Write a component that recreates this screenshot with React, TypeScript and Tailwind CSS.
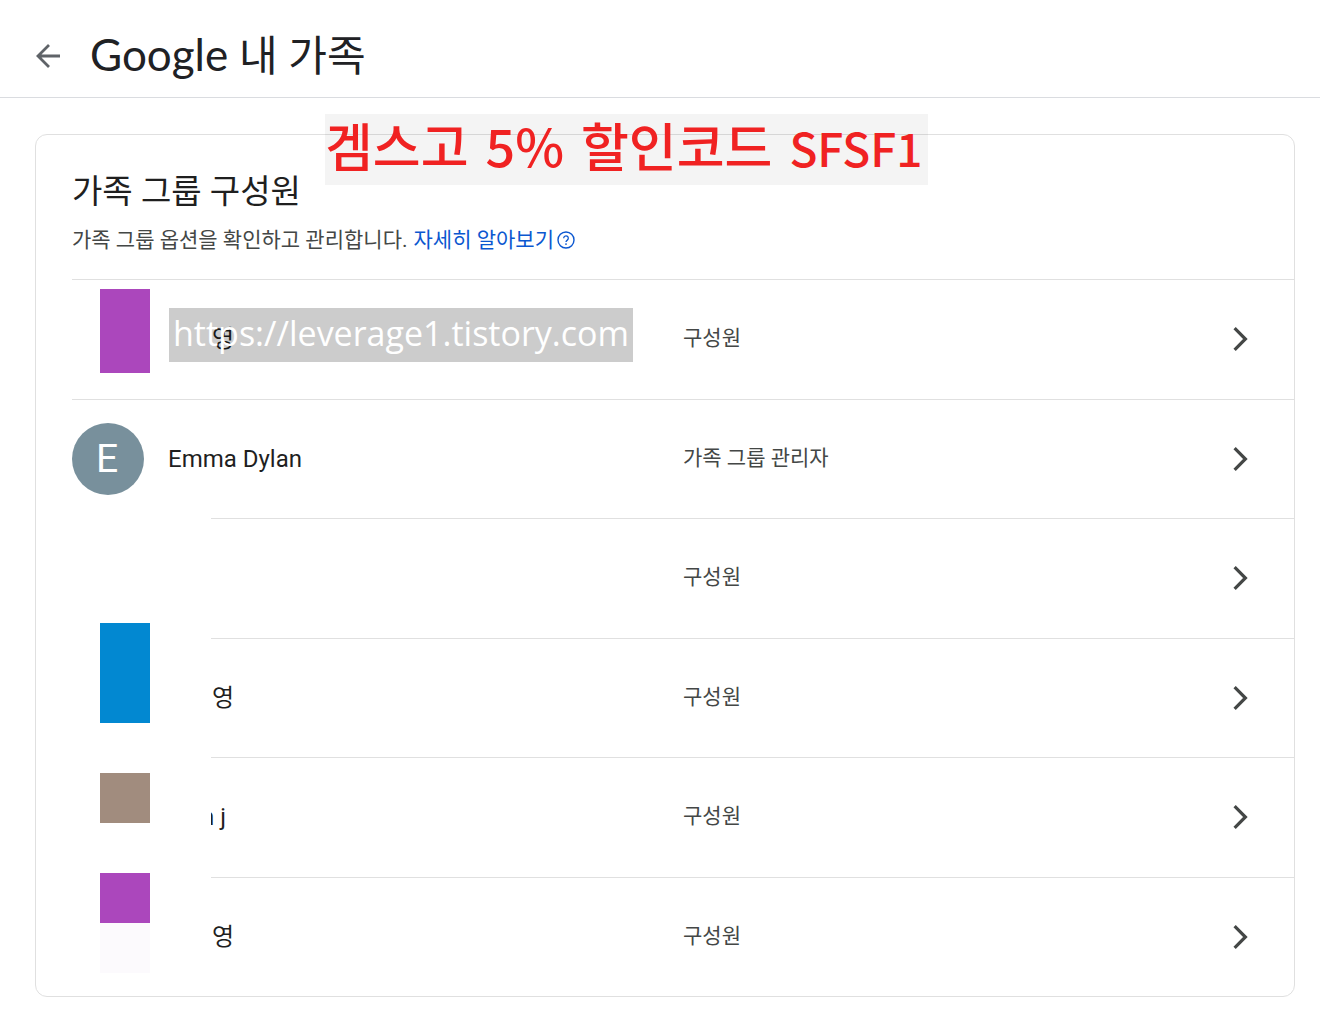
import React from "react";

type Member = {
  id: number;
  name: React.ReactNode;
  role: string;
  initial?: string;
};

const members: Member[] = [
  { id: 1, name: <span className="pl-11">영</span>, role: "구성원" },
  { id: 2, name: "Emma Dylan", role: "가족 그룹 관리자", initial: "E" },
  { id: 3, name: "", role: "구성원" },
  { id: 4, name: <span className="pl-11">영</span>, role: "구성원" },
  { id: 5, name: <span className="pl-[33px]">n j</span>, role: "구성원" },
  { id: 6, name: <span className="pl-11">영</span>, role: "구성원" },
];

const BackIcon = () => (
  <svg viewBox="0 0 24 24" fill="none" stroke="currentColor" className="size-6" aria-hidden="true">
    <path d="M24 12H2M13 1L2 12l11 11" strokeWidth="2.8" />
  </svg>
);

const ChevronIcon = () => (
  <svg viewBox="0 0 16 24" fill="none" stroke="currentColor" className="h-6 w-4" aria-hidden="true">
    <path d="M1.6 1.2L12.4 12L1.6 22.8" strokeWidth="3.2" />
  </svg>
);

const HelpIcon = () => (
  <svg viewBox="0 0 18 18" fill="none" stroke="currentColor" className="size-[18px]" aria-hidden="true">
    <circle cx="9" cy="9" r="8" strokeWidth="1.4" />
    <path d="M6.7 7.2a2.3 2.3 0 1 1 3.6 1.9C9.4 9.7 9 10 9 11" strokeWidth="1.3" />
    <circle cx="9" cy="13.1" r="0.9" fill="currentColor" stroke="none" />
  </svg>
);

const MemberRow: React.FC<{ member: Member }> = ({ member }) => (
  <li className="border-t border-[#e0e0e0] odd:h-[120px] even:h-[119px]">
    <a href="#" className="flex h-full items-center pr-[45px] pb-px">
      <span className="mr-6 flex size-18 shrink-0 items-center">
        {member.initial && (
          <span className="flex size-[72px] items-center justify-center rounded-full bg-[#78909c] pt-0.5 pr-0.5 font-['Roboto',sans-serif] text-[39px] text-white">
            {member.initial}
          </span>
        )}
      </span>
      <span className="w-[515px] shrink-0 text-2xl text-[#1f1f1f]">{member.name}</span>
      <span className="flex-1 text-[21px] text-[#444746]">{member.role}</span>
      <span className="text-[#444746]">
        <ChevronIcon />
      </span>
    </a>
  </li>
);

const App: React.FC = () => {
  return (
    <div className="relative min-h-screen bg-white pb-[26px] font-['Roboto','Noto_Sans_CJK_KR',sans-serif]">
      <header className="flex h-[98px] items-center border-b border-[#dadce0] pt-3.5 pl-9">
        <button type="button" aria-label="뒤로" className="text-[#5f6368]">
          <BackIcon />
        </button>
        <h1 className="ml-[30px] pb-0.5 font-['Lato','Noto_Sans_CJK_KR',sans-serif] text-[42px] leading-[56px] text-[#202124]">
          <span className="text-[44px]">Google</span> 내 가족
        </h1>
      </header>

      <main className="mt-9 mr-[25px] ml-[35px] rounded-xl border border-[#e0e0e0] pl-9">
        <h2 className="pt-[33px] text-[33px] leading-[48px] text-[#1f1f1f]">가족 그룹 구성원</h2>
        <p className="mt-2 mb-[23px] flex items-center text-[21px] leading-8 text-[#444746]">
          가족 그룹 옵션을 확인하고 관리합니다.
          <a href="#" className="ml-1.5 flex items-center gap-[3px] text-[#0b57d0]">
            자세히 알아보기
            <HelpIcon />
          </a>
        </p>

        <div className="relative">
          <ul>
            {members.map((member) => (
              <MemberRow key={member.id} member={member} />
            ))}
          </ul>

          {/* blocks that hide the names and photos */}
          <div className="absolute top-[239px] bottom-0 left-0 w-[139px] bg-white" />
          <div className="absolute top-[10px] left-7 h-[84px] w-[50px] bg-[#ab47bc]" />
          <div className="absolute top-[344px] left-7 h-[100px] w-[50px] bg-[#0288d1]" />
          <div className="absolute top-[494px] left-7 h-[50px] w-[50px] bg-[#a18c7e]" />
          <div className="absolute top-[594px] left-7 h-[50px] w-[50px] bg-[#ab47bc]" />
          <div className="absolute top-[644px] left-7 h-[50px] w-[50px] bg-[#fcfafd]" />

          <div className="absolute top-[29px] left-[97px] flex h-[54px] w-[464px] items-center justify-center bg-black/20 pb-1 font-['Open_Sans',sans-serif] text-[34px] whitespace-nowrap text-white">
            https://leverage1.tistory.com
          </div>
        </div>
      </main>

      <div className="absolute top-[114px] left-[325px] flex h-[71px] w-[603px] items-baseline gap-[17px] bg-black/[0.045] font-['Noto_Sans_CJK_KR',sans-serif] text-[52px] leading-[62px] font-medium whitespace-nowrap text-[#f02222]">
        <span>겜스고</span>
        <span>5%</span>
        <span>할인코드</span>
        <span className="text-[46px]">SFSF1</span>
      </div>
    </div>
  );
};

export default App;
